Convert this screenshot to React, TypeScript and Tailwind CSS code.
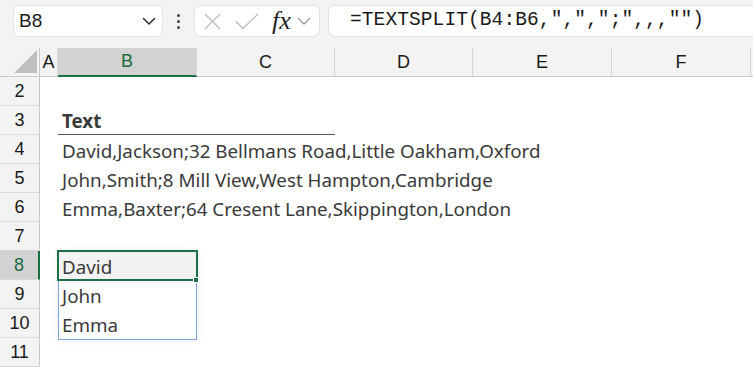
import React from "react";

const cols = ["A", "B", "C", "D", "E", "F"];

function HeaderCell({ label, active }: { label: string; active?: boolean }) {
  return (
    <div
      className={
        "flex items-center justify-center border-r border-[#d4d4d4] text-[18px] " +
        (active
          ? "bg-[#d2d2d2] text-[#1d6b3e] border-b-2 border-b-[#1d7044]"
          : "bg-[#f3f3f3] text-[#1a1a1a] border-b border-b-[#c9c9c9]")
      }
      style={{ fontFamily: '"Liberation Sans", Arial, sans-serif' }}
    >
      {label}
    </div>
  );
}

function RowHead({ n, active }: { n: number; active?: boolean }) {
  return (
    <div
      className={
        "flex items-center justify-center border-b border-[#d9d9d9] text-[18px] " +
        (active
          ? "bg-[#d2d2d2] text-[#1d6b3e] border-r-2 border-r-[#1d7044]"
          : "bg-[#f3f3f3] text-[#1a1a1a] border-r border-r-[#c9c9c9]")
      }
      style={{ fontFamily: '"Liberation Sans", Arial, sans-serif' }}
    >
      {n}
    </div>
  );
}

const data: Record<number, { text: string; bold?: boolean }> = {
  3: { text: "Text", bold: true },
  4: { text: "David,Jackson;32 Bellmans Road,Little Oakham,Oxford" },
  5: { text: "John,Smith;8 Mill View,West Hampton,Cambridge" },
  6: { text: "Emma,Baxter;64 Cresent Lane,Skippington,London" },
  8: { text: "David" },
  9: { text: "John" },
  10: { text: "Emma" },
};

export default function App() {
  const rows = [2, 3, 4, 5, 6, 7, 8, 9, 10, 11];
  return (
    <div className="w-[753px] h-[369px] overflow-hidden bg-white">
      {/* Formula bar */}
      <div className="h-[48px] bg-[#f3f3f3] flex items-start pt-[5px] pl-[13px] overflow-hidden">
        <div className="w-[150px] h-[32px] shrink-0 bg-white rounded-[7px] border border-[#e3e3e3] flex items-center pl-[5px] pr-[6px]">
          <span
            className="text-[19px] text-[#1a1a1a] flex-1"
            style={{ fontFamily: '"Liberation Sans", Arial, sans-serif' }}
          >
            B8
          </span>
          <svg width="14" height="9" viewBox="0 0 14 9" fill="none">
            <path d="M1.5 1.5 L7 7 L12.5 1.5" stroke="#333" strokeWidth="1.6" strokeLinecap="round" strokeLinejoin="round" />
          </svg>
        </div>
        <div className="w-[31px] h-[32px] shrink-0 flex flex-col items-center justify-center gap-[3px]">
          <div className="w-[3px] h-[3px] rounded-full bg-[#444]" />
          <div className="w-[3px] h-[3px] rounded-full bg-[#444]" />
          <div className="w-[3px] h-[3px] rounded-full bg-[#444]" />
        </div>
        <div className="w-[126px] h-[32px] shrink-0 bg-white rounded-[7px] border border-[#e3e3e3] flex items-center pl-[8px]">
          <svg width="19" height="19" viewBox="0 0 19 19" fill="none">
            <path d="M2 2 L17 17 M17 2 L2 17" stroke="#bdbdbd" strokeWidth="1.3" />
          </svg>
          <svg width="24" height="17" viewBox="0 0 24 17" fill="none" className="ml-[13px]">
            <path d="M1 8.5 L8 15.5 L23 1" stroke="#bdbdbd" strokeWidth="1.3" />
          </svg>
          <span
            className="ml-[13px] text-[26px] italic text-[#222] leading-none"
            style={{ fontFamily: '"Liberation Serif", "Times New Roman", serif' }}
          >
            fx
          </span>
          <svg width="14" height="9" viewBox="0 0 14 9" fill="none" className="ml-[6px]">
            <path d="M1.5 1.5 L7 7 L12.5 1.5" stroke="#9a9a9a" strokeWidth="1.3" strokeLinecap="round" strokeLinejoin="round" />
          </svg>
        </div>
        <div className="w-[460px] h-[32px] shrink-0 ml-[8px] bg-white rounded-l-[7px] border border-[#e3e3e3] flex items-center pl-[21px]">
          <span
            className="text-[19.5px] text-[#1a1a1a] whitespace-nowrap tracking-[0.1px]"
            style={{ fontFamily: '"Liberation Mono", "Courier New", monospace' }}
          >
            =TEXTSPLIT(B4:B6,",",";",,,"")
          </span>
        </div>
      </div>

      {/* Grid */}
      <div
        className="relative grid grid-cols-[40px_18px_139px_138px_138px_139px_139px_1fr] auto-rows-[29px]"
        style={{ fontFamily: '"Noto Sans", sans-serif' }}
      >
        {/* corner */}
        <div className="bg-[#f3f3f3] border-r border-r-[#c9c9c9] border-b border-b-[#c9c9c9] relative">
          <svg width="23" height="23" viewBox="0 0 23 23" className="absolute left-[14px] bottom-[3px]">
            <path d="M23 0 L23 23 L0 23 Z" fill="#bfbfbf" />
          </svg>
        </div>
        {cols.map((c) => (
          <HeaderCell key={c} label={c} active={c === "B"} />
        ))}
        <div className="bg-[#f3f3f3] border-b border-b-[#c9c9c9]" />

        {rows.map((r) => {
          const d = data[r];
          return (
            <React.Fragment key={r}>
              <RowHead n={r} active={r === 8} />
              <div />
              <div
                className={
                  "relative flex items-center pl-[4px] pt-[3px] whitespace-nowrap text-[#3a3a3a] " +
                  (r === 3 ? "border-b border-[#595959] " : "") +
                  (r === 8 ? "bg-[#f2f2f2] " : "") +
                  (d?.bold ? "font-bold text-[18.8px]" : "text-[18.8px]")
                }
              >
                {d && <span className="relative z-10">{d.text}</span>}
              </div>
              <div className={r === 3 ? "border-b border-[#595959]" : ""} />
              <div />
              <div />
              <div />
              <div />
            </React.Fragment>
          );
        })}

        {/* spill range border */}
        <div className="absolute left-[58px] top-[203px] w-[139px] h-[89px] border border-[#7fa4db] shadow-[0_0_8px_rgba(0,0,0,0.08)] pointer-events-none" />
        {/* active cell */}
        <div className="absolute left-[57px] top-[202px] w-[141px] h-[31px] border-2 border-[#1d7044] pointer-events-none" />
        {/* fill handle */}
        <div className="absolute left-[193px] top-[229px] w-[6px] h-[6px] bg-[#1d7044] border border-white pointer-events-none" />
      </div>
    </div>
  );
}
